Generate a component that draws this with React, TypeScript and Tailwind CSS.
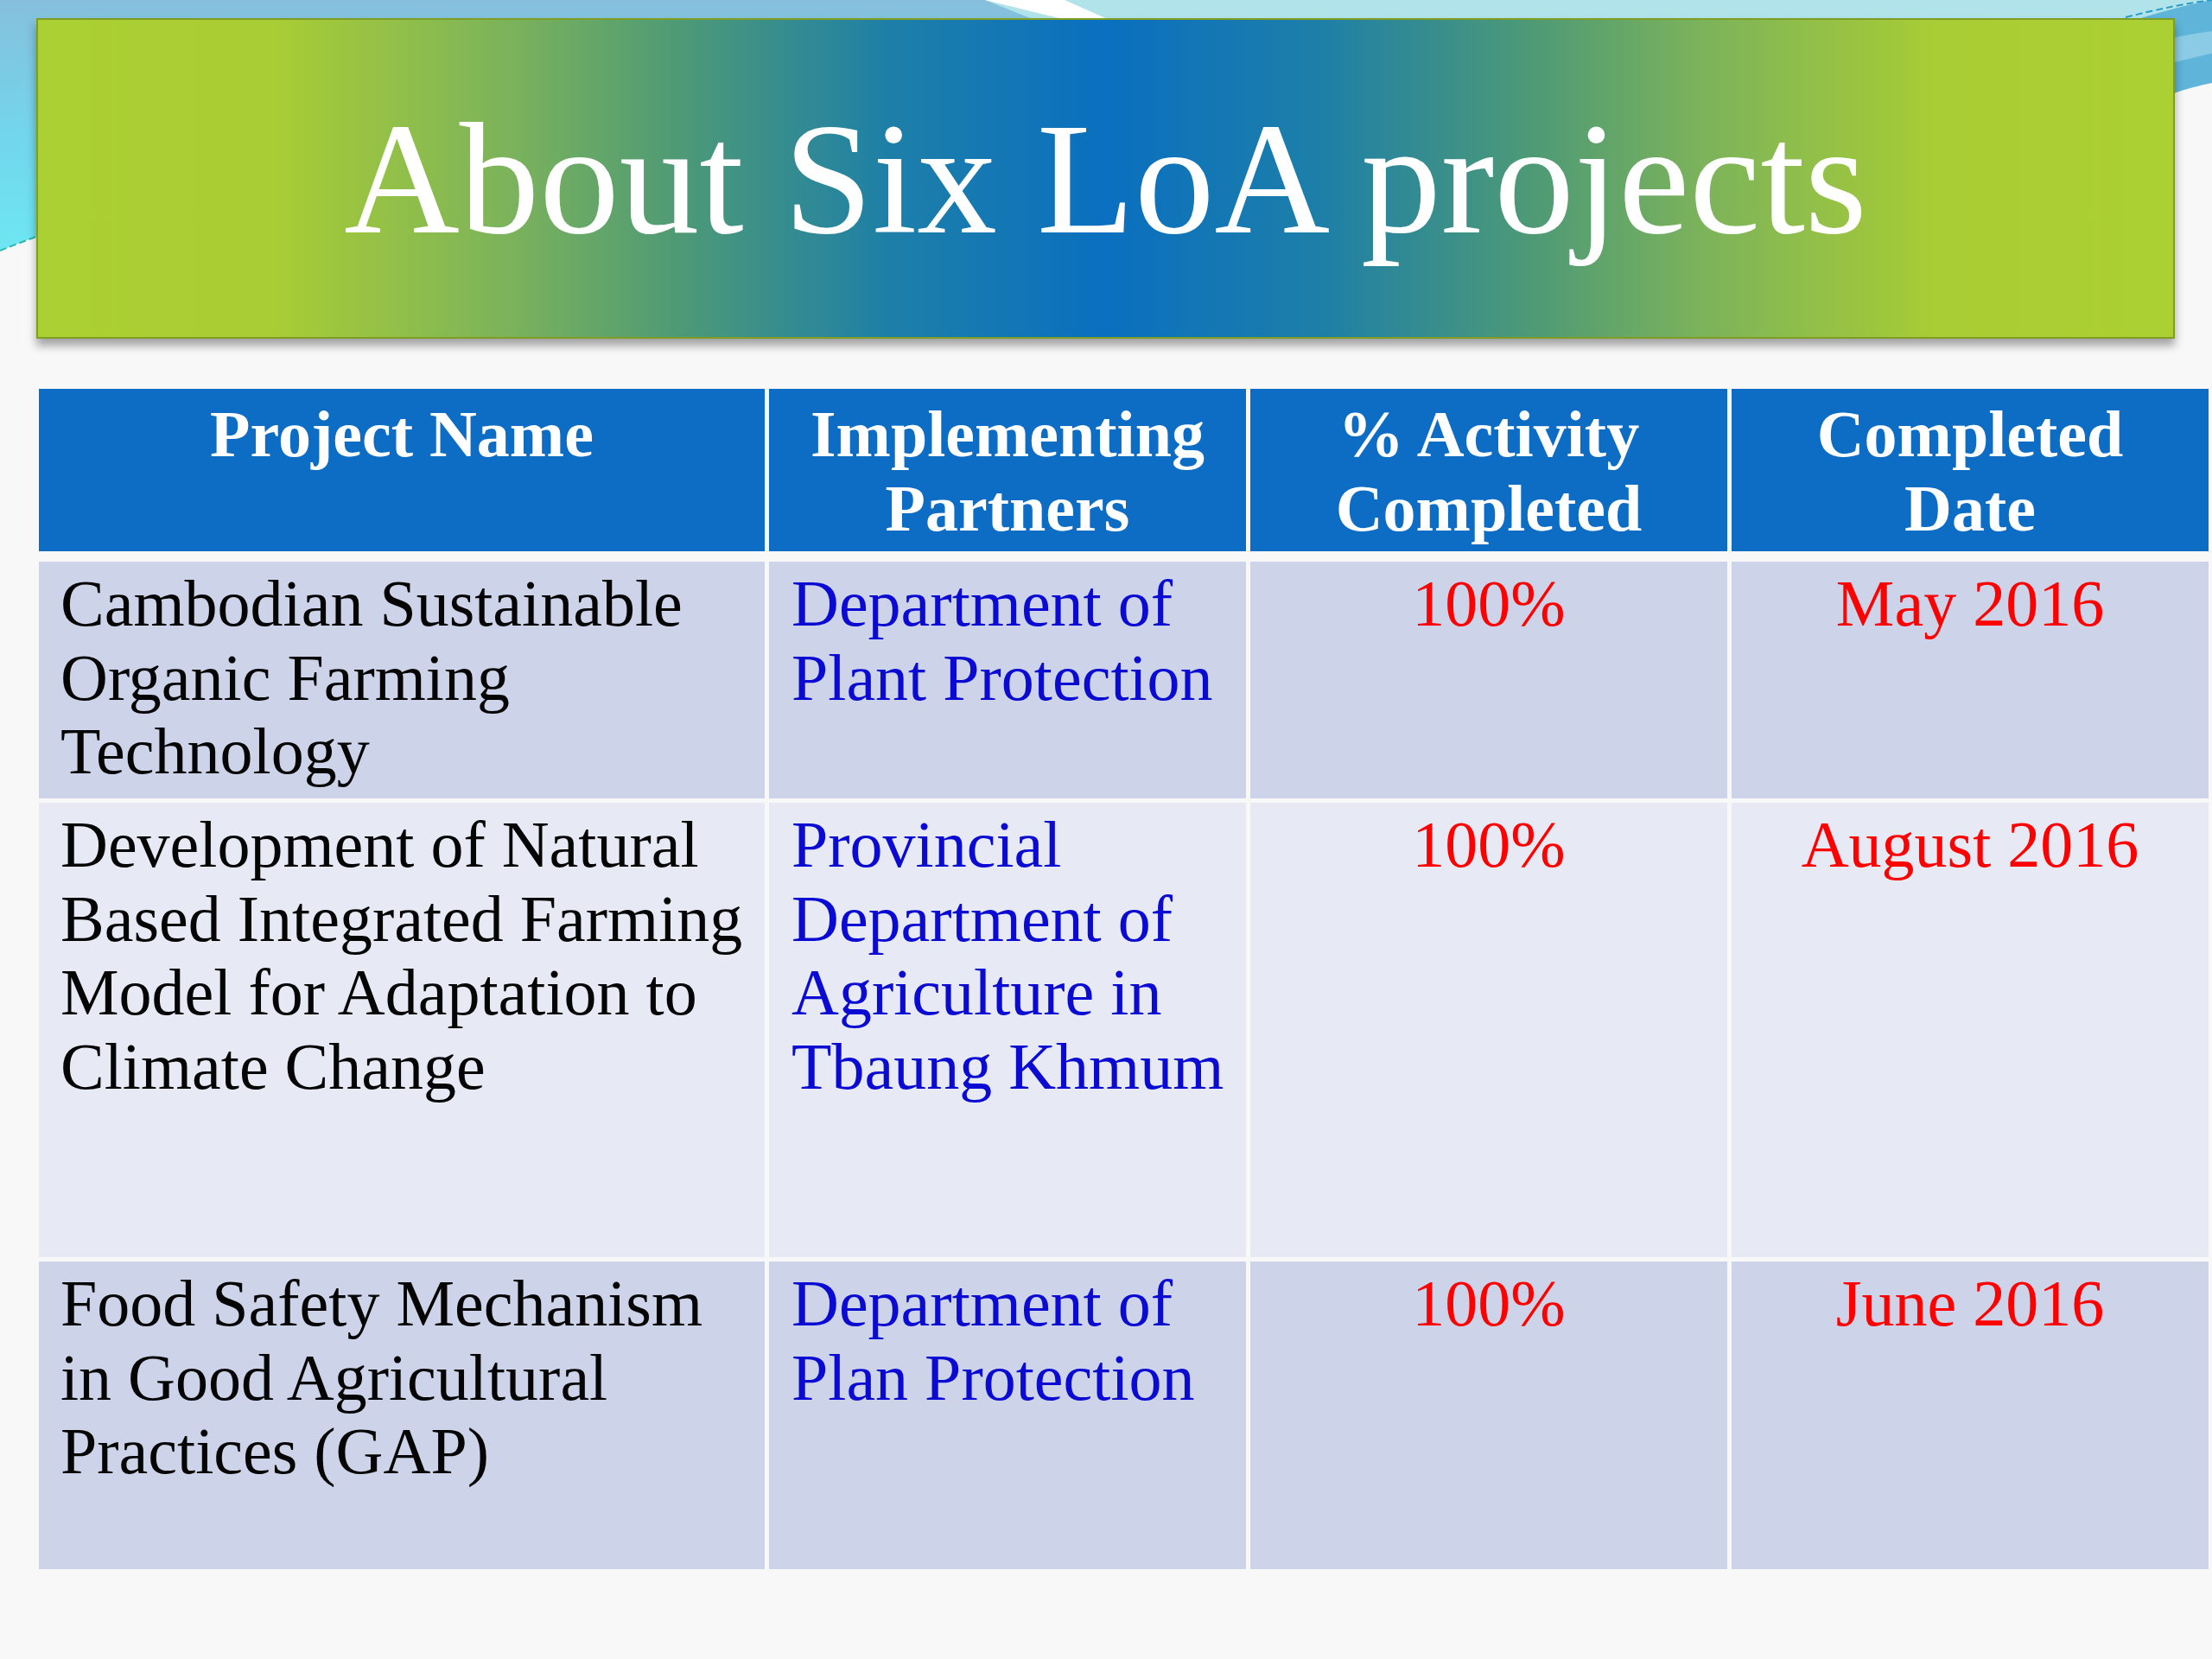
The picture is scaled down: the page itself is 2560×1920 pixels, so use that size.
const serif = "font-['Liberation_Serif','Times_New_Roman',serif]";

type Row = {
  name: string[];
  partner: string[];
  pct: string;
  date: string;
  height: string;
  bg: string;
};

const rows: Row[] = [
  {
    name: ["Cambodian Sustainable", "Organic Farming", "Technology"],
    partner: ["Department of", "Plant Protection"],
    pct: "100%",
    date: "May 2016",
    height: "h-[274px]",
    bg: "bg-[#cdd4e9]",
  },
  {
    name: [
      "Development of Natural",
      "Based Integrated Farming",
      "Model for Adaptation to",
      "Climate Change",
    ],
    partner: ["Provincial", "Department of", "Agriculture in", "Tbaung Khmum"],
    pct: "100%",
    date: "August 2016",
    height: "h-[526px]",
    bg: "bg-[#e7eaf5]",
  },
  {
    name: ["Food Safety Mechanism", "in Good Agricultural", "Practices (GAP)"],
    partner: ["Department of", "Plan Protection"],
    pct: "100%",
    date: "June 2016",
    height: "h-[356px]",
    bg: "bg-[#cdd4e9]",
  },
];

const headers = [
  ["Project Name"],
  ["Implementing", "Partners"],
  ["% Activity", "Completed"],
  ["Completed", "Date"],
];

function Lines({ lines }: { lines: string[] }) {
  return (
    <>
      {lines.map((l) => (
        <div key={l} className="whitespace-nowrap">
          {l}
        </div>
      ))}
    </>
  );
}

function Backdrop() {
  return (
    <svg
      className="absolute left-0 top-0"
      width="2560"
      height="460"
      viewBox="0 0 2560 460"
    >
      <defs>
        <linearGradient id="leftsky" x1="0" y1="0" x2="0" y2="1">
          <stop offset="0" stopColor="#86bfdc" />
          <stop offset="0.55" stopColor="#72d6ec" />
          <stop offset="1" stopColor="#6ee6f2" />
        </linearGradient>
      </defs>
      <rect x="0" y="0" width="2560" height="40" fill="#b1e3ea" />
      <path
        d="M0 0 H1140 L1240 40 C 800 90, 300 170, 0 290 Z"
        fill="url(#leftsky)"
      />
      <path d="M1140 0 H1232 L1300 30 L1262 30 Z" fill="#ffffff" />
      <path
        d="M0 290 C 300 170, 800 90, 1240 40"
        fill="none"
        stroke="#2bb7b0"
        strokeWidth="2"
        strokeDasharray="8 4"
      />
      <path
        d="M2420 40 C 2470 22, 2520 8, 2560 0 V 96 C 2545 99, 2530 103, 2510 110 Z"
        fill="#5fb4d9"
      />
      <path
        d="M2450 60 C 2490 48, 2530 40, 2560 36 V 62 C 2540 66, 2525 70, 2510 74 Z"
        fill="#8ccbe6"
      />
      <path
        d="M2460 20 C 2500 10, 2530 4, 2560 0"
        fill="none"
        stroke="#2a9cc8"
        strokeWidth="2"
        strokeDasharray="8 4"
      />
    </svg>
  );
}

export default function App() {
  return (
    <div
      className={`relative h-[1920px] w-[2560px] overflow-hidden bg-[#f8f8f8] ${serif}`}
    >
      <Backdrop />

      <div className="relative flex flex-col">
        {/* Title banner */}
        <div
          className="
            ml-[42px]
            mt-[21px]
            flex
            h-[371px]
            w-[2475px]
            items-center
            justify-center
            border-2
            border-[#7f9d22]
            bg-[linear-gradient(90deg,#abd033_0%,#a9cd34_11%,#7cb35b_22%,#4e9a76_30%,#1d7fa8_40%,#0a6fc0_50%,#1d7fa8_60%,#4e9a76_70%,#7cb35b_78%,#a9cd34_89%,#abd033_100%)]
            shadow-[0_8px_10px_rgba(0,0,0,0.35)]
          "
        >
          <h1 className="text-[185px] leading-none text-white">
            About Six LoA projects
          </h1>
        </div>

        {/* Table */}
        <div className="ml-[45px] mt-[58px] flex w-[2511px] flex-col">
          <div className="grid h-[188px] grid-cols-[840px_552px_552px_552px] gap-x-[5px]">
            {headers.map((h) => (
              <div
                key={h.join(" ")}
                className="bg-[#0d6cc4] pt-[9px] text-center text-[76px] font-bold leading-[86px] text-white"
              >
                <Lines lines={h} />
              </div>
            ))}
          </div>

          <div className="mt-[12px] flex flex-col gap-y-[5px]">
            {rows.map((r) => (
              <div
                key={r.name[0]}
                className={`grid grid-cols-[840px_552px_552px_552px] gap-x-[5px] ${r.height}`}
              >
                <div
                  className={`${r.bg} pl-[25px] pt-[6px] text-[76px] leading-[85.5px] text-[#050505]`}
                >
                  <Lines lines={r.name} />
                </div>
                <div
                  className={`${r.bg} pl-[26px] pt-[6px] text-[76px] leading-[85.5px] text-[#0a0ad2]`}
                >
                  <Lines lines={r.partner} />
                </div>
                <div
                  className={`${r.bg} pt-[6px] text-center text-[76px] leading-[85.5px] text-[#ff0000]`}
                >
                  {r.pct}
                </div>
                <div
                  className={`${r.bg} pt-[6px] text-center text-[76px] leading-[85.5px] text-[#ff0000]`}
                >
                  {r.date}
                </div>
              </div>
            ))}
          </div>
        </div>
      </div>
    </div>
  );
}
